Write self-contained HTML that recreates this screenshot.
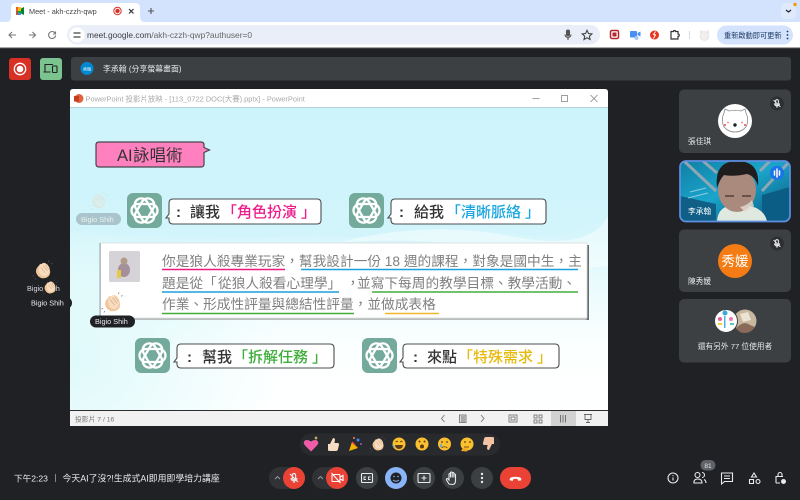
<!DOCTYPE html>
<html lang="zh-Hant"><head><meta charset="utf-8"><title>Meet - akh-czzh-qwp</title>
<style>
html,body{margin:0;padding:0;background:#202124;width:800px;height:500px;overflow:hidden}
svg{display:block;position:absolute;left:0;top:0;filter:blur(.3px)}
text{font-family:"Liberation Sans","Noto Sans CJK TC",sans-serif}
</style></head><body>
<svg width="800" height="500" viewBox="0 0 800 500" xmlns="http://www.w3.org/2000/svg">
<defs>
<linearGradient id="sl" x1="0" y1="0" x2="0" y2="1"><stop offset="0" stop-color="#cdf3fb"/><stop offset=".4" stop-color="#d3f5fb"/><stop offset=".58" stop-color="#eafbfd"/><stop offset=".8" stop-color="#fcffff"/><stop offset="1" stop-color="#fff"/></linearGradient>
<radialGradient id="pale" gradientUnits="userSpaceOnUse" cx="70" cy="360" r="210"><stop offset="0" stop-color="#dcf9fa" stop-opacity=".9"/><stop offset="1" stop-color="#dcf9fa" stop-opacity="0"/></radialGradient>
<linearGradient id="vid" x1="0" y1="0" x2="1" y2="1"><stop offset="0" stop-color="#0f7fa5"/><stop offset=".45" stop-color="#1ba5cc"/><stop offset="1" stop-color="#0a5578"/></linearGradient>
<clipPath id="vc"><rect x="680" y="161" width="110" height="60" rx="6"/></clipPath>
<symbol id="knot" viewBox="-18 -18 36 36" overflow="visible"><g fill="none" stroke="#fff" stroke-width="2.300"><rect x="-13" y="-6.500" width="26" height="13" rx="6.500"/><rect x="-13" y="-6.500" width="26" height="13" rx="6.500" transform="rotate(60)"/><rect x="-13" y="-6.500" width="26" height="13" rx="6.500" transform="rotate(120)"/></g></symbol>
<symbol id="clap" viewBox="0 0 20 20" overflow="visible">
<path d="M3 8l4-5 3 1 2-2 3 2 2 3 1 5q0 6-6 7-5 1-8-3-3-4-1-8z" fill="#f0c69c"/>
<path d="M6 6l4-4 3 1 3 3 1 5q-1 5-5 6-4 0-6-4-1-4 0-7z" fill="#f8dcc0"/>
<path d="M7.500 7l5 6M10 5l5 6M12.500 4l3.500 5" stroke="#dcae84" stroke-width=".8" fill="none"/>
<path d="M16 1l1-1.500M19 3.500l1.500-1M0 16l-1.500 1M2 19l-1 1.500" stroke="#666" stroke-width=".7"/></symbol>
<symbol id="mute" viewBox="0 0 14 14"><path d="M7 2.500a1.600 1.600 0 0 1 1.600 1.600v3a1.600 1.600 0 0 1-3.200 0v-3A1.600 1.600 0 0 1 7 2.500zM4 7a3 3 0 0 0 6 0M7 10v2M3 3l8 8" fill="none" stroke="#e8eaed" stroke-width="1.200"/></symbol>
</defs>

<!-- Chrome tab strip -->
<rect width="800" height="22" fill="#d3e3fd"/>
<path d="M6 22q5 0 5-5V8q0-5 5-5h119q5 0 5 5v9q0 5 5 5z" fill="#fff"/>
<g transform="translate(16,7)"><rect width="5" height="8" rx="1" fill="#00ac47"/><path d="M0 0h5v4H0z" fill="#fbbc04"/><path d="M0 0h2v8H0z" fill="#ea4335" opacity=".8"/><path d="M5 1.500l3-1.500v8l-3-1.500z" fill="#00832d"/><path d="M2 6h3v2H2z" fill="#4285f4"/></g>
<text x="29" y="14" font-size="7.300" fill="#444746">Meet - akh-czzh-qwp</text>
<circle cx="117.500" cy="11" r="3.700" fill="none" stroke="#d93025" stroke-width="1"/><circle cx="117.500" cy="11" r="2.200" fill="#d93025"/>
<path d="M129 9l4.500 4.500M133.500 9L129 13.500" stroke="#333" stroke-width="1.200"/>
<path d="M151 8v6M148 11h6" stroke="#555" stroke-width="1.100"/>
<rect x="781" y="3" width="15" height="16" rx="4" fill="#dee9fb"/>
<path d="M786 10l2.500 2 2.500-2" fill="none" stroke="#222" stroke-width="1.200"/><circle cx="795" cy="4.500" r="1.700" fill="#f29900"/>

<!-- Chrome toolbar -->
<rect y="22" width="800" height="26" fill="#fff"/>
<rect y="47.500" width="800" height="1" fill="#555"/>
<path d="M16 35H9M12 32l-3 3 3 3" fill="none" stroke="#777" stroke-width="1.100"/>
<path d="M29 35h6.500M32.500 32l3 3-3 3" fill="none" stroke="#777" stroke-width="1.100"/>
<path d="M55 33a3.500 3.500 0 1 0 .6 2.500M55.500 31.500V34H53" fill="none" stroke="#777" stroke-width="1.100"/>
<rect x="67" y="25" width="533" height="19.500" rx="9.700" fill="#e9eef8"/>
<circle cx="77" cy="35" r="7.500" fill="#fff"/><path d="M73.500 33h7M73.500 37h7" stroke="#444" stroke-width="1.300"/>
<text x="87" y="38" font-size="8.400" fill="#3c4043">meet.google.com<tspan fill="#666">/akh-czzh-qwp?authuser=0</tspan></text>
<g fill="none" stroke="#555" stroke-width="1.100"><rect x="566.500" y="30" width="3" height="6" rx="1.500" fill="#555"/><path d="M565 34.500a3 3 0 0 0 6 0M568 37.500V40"/></g>
<path d="M587 30.300l1.500 3.200 3.400.4-2.500 2.300.7 3.300-3.100-1.700-3 1.700.7-3.300-2.500-2.300 3.400-.4z" fill="none" stroke="#444" stroke-width="1.100"/>
<rect x="610.500" y="30.500" width="8" height="8" rx="1.500" fill="#fff" stroke="#b3262e" stroke-width="1.500"/><rect x="612.500" y="32.500" width="4" height="4" fill="#b3262e"/>
<rect x="630" y="31" width="7" height="6.500" rx="1" fill="#4a90f0"/><path d="M637.500 33l3-1.500v5l-3-1.500z" fill="#4a90f0"/><circle cx="636.500" cy="38" r="2" fill="#a6c8f5"/>
<circle cx="654.500" cy="35" r="4.500" fill="#e8331e"/><path d="M655.500 31.500l-2 3 2 .5-2 3.500" fill="none" stroke="#fff" stroke-width="1"/>
<path d="M671 31.500h2.500a1 1 0 0 1 2 0h2.500v2.500a1 1 0 0 1 0 2.500V39H671z" fill="none" stroke="#333" stroke-width="1.200"/>
<rect x="689" y="31" width=".8" height="8" fill="#c5d3e6"/>
<circle cx="704.500" cy="36" r="4.500" fill="#f1efee" stroke="#ddd" stroke-width=".6"/><path d="M700 33l1-2.500 2 1.500M709 33l-1-2.500-2 1.500" fill="#f1efee" stroke="#ddd" stroke-width=".6"/>
<rect x="717" y="25.500" width="76" height="19" rx="9.500" fill="#d3e3fd"/>
<text x="724" y="38" font-size="7.200" fill="#1f3b63">重新啟動即可更新</text>
<g fill="#1f3b63"><circle cx="787.500" cy="31.500" r=".9"/><circle cx="787.500" cy="35" r=".9"/><circle cx="787.500" cy="38.500" r=".9"/></g>

<!-- share bar -->
<rect x="9" y="58" width="22" height="22" rx="3" fill="#d93025"/>
<circle cx="20" cy="69" r="5.700" fill="none" stroke="#fff" stroke-width="1.300"/><circle cx="20" cy="69" r="3.300" fill="#fff"/>
<rect x="40" y="58" width="22" height="22" rx="3" fill="#7bc48f"/>
<path d="M45 72v-7.500h8M43.500 72h7" fill="none" stroke="#222" stroke-width="1.100"/><rect x="52.500" y="66" width="4.500" height="6.500" rx=".6" fill="none" stroke="#222" stroke-width="1.100"/>
<rect x="71" y="57" width="720" height="23.500" rx="3" fill="#3c4043"/>
<circle cx="87" cy="68.500" r="6.500" fill="#0288d1"/>
<text x="87" y="70.500" font-size="4" fill="#fff" text-anchor="middle">承翰</text>
<text x="103" y="71.500" font-size="7.900" fill="#e8eaed">李承翰 (分享螢幕畫面)</text>

<!-- PowerPoint window -->
<path d="M70 107V92q0-3 3-3h532q3 0 3 3v15z" fill="#fff"/>
<circle cx="79" cy="98.500" r="4.500" fill="#e0633f"/><rect x="74" y="96" width="5" height="5.500" fill="#c43e1c"/>
<text x="85.500" y="101.500" font-size="7.430" fill="#a9a9a9">PowerPoint 投影片放映 - [113_0722 DOC(大賽).pptx] - PowerPoint</text>
<path d="M532.500 98.500h7" stroke="#888" stroke-width=".8"/><rect x="561.500" y="95.500" width="6" height="6" fill="none" stroke="#888" stroke-width=".8"/><path d="M590.500 95l7 7M597.500 95l-7 7" stroke="#888" stroke-width=".8"/>
<rect x="70" y="107" width="538" height="304" fill="url(#sl)"/>
<rect x="70" y="230" width="300" height="181" fill="url(#pale)"/>
<rect x="70" y="107" width="538" height="1" fill="#8fa9ad"/>
<path d="M400 240q60-22 110-8t98-18v-107H70v125q100 10 180 6t150 2z" fill="#cff4fc" opacity=".55"/>
<path d="M340 242q90-22 170-6t98-20v50q-80 10-110-10t-158-14z" fill="#fff" opacity=".45"/>
<rect x="70" y="410" width="538" height="1.300" fill="#2d2d2d"/>
<rect x="70" y="411" width="538" height="15" fill="#f1f1f1"/>
<text x="75" y="421.500" font-size="6.800" fill="#777">投影片 7 / 16</text>
<g fill="none" stroke="#777" stroke-width=".9">
<path d="M444.500 415l-3 3.500 3 3.500M481 415l3 3.500-3 3.500"/>
<rect x="459.500" y="415" width="6.500" height="7.500" fill="#ddd"/><path d="M461 417h4M461 419h4M461 421h4"/>
<rect x="509" y="415" width="8" height="7"/><rect x="511" y="417" width="4" height="3"/>
<rect x="534" y="415" width="3" height="3"/><rect x="539" y="415" width="3" height="3"/><rect x="534" y="420" width="3" height="3"/><rect x="539" y="420" width="3" height="3"/>
</g>
<rect x="551" y="411" width="25" height="15" fill="#d2d2d2"/>
<g fill="none" stroke="#666" stroke-width=".9"><path d="M560.500 415v7.500M563 415v7.500M565.500 415v7.500"/><path d="M584 414.500h8M585 414.500v5h6v-5M588 419.500v2.500M586 422.500h4"/></g>

<!-- slide title -->
<path d="M99 142h102q3 0 3 3v2.500l5.500 2.500-5.500 2.500V164q0 3-3 3H99q-3 0-3-3v-19q0-3 3-3z" fill="#ff80bf" stroke="#44474a" stroke-width="1.200"/>
<text y="161" font-size="16.500" fill="#333"><tspan x="117">A</tspan><tspan x="128">I</tspan><tspan x="133">詠唱術</tspan></text>

<!-- tiles -->
<rect x="127" y="193" width="35" height="35" rx="6" fill="#74aa9c"/><use href="#knot" x="126.500" y="192.500" width="36" height="36"/>
<rect x="349" y="193" width="35" height="35" rx="6" fill="#74aa9c"/><use href="#knot" x="348.500" y="192.500" width="36" height="36"/>
<rect x="135" y="338" width="35" height="35" rx="6" fill="#74aa9c"/><use href="#knot" x="134.500" y="337.500" width="36" height="36"/>
<rect x="362" y="338" width="35" height="35" rx="6" fill="#74aa9c"/><use href="#knot" x="361.500" y="337.500" width="36" height="36"/>

<g fill="#fff" stroke="#4a4d50" stroke-width="1.100">
<path d="M173 199h144q4 0 4 4v17q0 4-4 4H173q-4 0-4-4v-2l-3 0 3-4v-11q0-4 4-4z"/>
<path d="M395 199h147q4 0 4 4v17q0 4-4 4H395q-4 0-4-4v-2l-3 0 3-4v-11q0-4 4-4z"/>
<path d="M181 344h149q4 0 4 4v16q0 4-4 4H181q-4 0-4-4v-2l-3 0 3-4v-10q0-4 4-4z"/>
<path d="M407 344h148q4 0 4 4v16q0 4-4 4H407q-4 0-4-4v-2l-3 0 3-4v-10q0-4 4-4z"/>
</g>
<g font-size="15" fill="#333" font-weight="500">
<text x="176" y="217" font-weight="700">:</text><text y="217"><tspan x="190">讓我</tspan><tspan x="222" fill="#ec1c8c">「</tspan><tspan x="237" fill="#ec1c8c">角色扮演</tspan><tspan x="301" fill="#ec1c8c">」</tspan></text>
<text x="399" y="217" font-weight="700">:</text><text y="217"><tspan x="414">給我</tspan><tspan x="446" fill="#1aa7e0">「</tspan><tspan x="461" fill="#1aa7e0">清晰脈絡</tspan><tspan x="525" fill="#1aa7e0">」</tspan></text>
<text x="187" y="362" font-weight="700">:</text><text y="362"><tspan x="202">幫我</tspan><tspan x="233" fill="#3fae3a">「</tspan><tspan x="248" fill="#3fae3a">拆解任務</tspan><tspan x="312" fill="#3fae3a">」</tspan></text>
<text x="413" y="362" font-weight="700">:</text><text y="362"><tspan x="427">來點</tspan><tspan x="458" fill="#e8b90f">「</tspan><tspan x="473" fill="#e8b90f">特殊需求</tspan><tspan x="537" fill="#e8b90f">」</tspan></text>
</g>

<!-- prompt box -->
<rect x="102" y="245" width="487" height="75" fill="#b9bcbc"/>
<rect x="586.500" y="245" width="2.500" height="75" fill="#6b6e70"/>
<rect x="100" y="243" width="487" height="75" fill="#fff" stroke="#d8dcdc" stroke-width=".8"/>
<rect x="99.500" y="243" width="1.200" height="75" fill="#9aa5a8"/>
<rect x="109" y="251" width="31" height="31" rx="1.500" fill="#d6d3d8"/>
<ellipse cx="124" cy="270" rx="6" ry="7" fill="#a58f9a"/><circle cx="124" cy="261" r="3.500" fill="#b09a88"/><rect x="117" y="270" width="4" height="8" fill="#e6c84d"/>
<g font-size="13.700" fill="#808080">
<text x="162" y="266">你是狼人殺專業玩家，幫我設計一份 18 週的課程，對象是國中生，主</text>
<text y="288"><tspan x="162">題是從「</tspan><tspan x="218">從狼人殺看心理學」</tspan><tspan x="346">，</tspan><tspan x="357">並寫下每周的教學目標、教學活動、</tspan></text>
<text x="162" y="309">作業、形成性評量與總結性評量，並做成表格</text>
</g>
<g stroke-width="1.500" fill="none">
<path d="M162 269.500h123" stroke="#ee1c80"/><path d="M301 269.500h277" stroke="#1aa0dc"/>
<path d="M162 292h177" stroke="#1aa0dc"/><path d="M372 292h206" stroke="#44ad3a"/>
<path d="M162 313.500h192" stroke="#44ad3a"/><path d="M385 313.500h54" stroke="#f0b72f"/>
</g>

<!-- reactions -->
<use href="#clap" x="34" y="261" width="18" height="18"/>
<rect x="24" y="282" width="40" height="13" rx="6.500" fill="#202124"/>
<text x="27" y="291" font-size="7.300" fill="#d8dadd">Bigio Shih</text>
<use href="#clap" x="43" y="280" width="14" height="14"/>
<rect x="26" y="297" width="46" height="12" rx="6" fill="#202124"/>
<text x="31" y="305.500" font-size="7.300" fill="#e8eaed">Bigio Shih</text>
<use href="#clap" x="103" y="293" width="19" height="19"/>
<rect x="90" y="315.500" width="45" height="12" rx="6" fill="#202124"/>
<text x="95" y="324" font-size="7.300" fill="#e8eaed">Bigio Shih</text>
<g opacity=".22"><use href="#clap" x="90" y="192" width="17" height="17"/><rect x="76" y="213" width="45" height="12" rx="6" fill="#202124"/></g>
<text x="81" y="222" font-size="7.300" fill="#fff" opacity=".75">Bigio Shih</text>

<!-- participant tiles -->
<rect x="679" y="89.500" width="112" height="63.500" rx="5" fill="#3c4043"/>
<circle cx="735" cy="121" r="17" fill="#fff"/>
<path d="M724 113l1-4 4 2q6-1.500 12 0l4-2 1 4q3 6 .5 13-4 6-11.500 6t-11.500-6q-2.500-7 .5-13z" fill="none" stroke="#888" stroke-width=".8"/>
<g fill="#e44"><circle cx="725" cy="125" r="1"/><circle cx="745" cy="125" r="1"/><circle cx="728" cy="122.500" r=".7"/><circle cx="742" cy="122.500" r=".7"/></g><circle cx="735" cy="125" r="1.700" fill="#222"/>
<circle cx="777" cy="103.500" r="7" fill="#2d2f33"/><use href="#mute" x="771" y="97.500" width="12" height="12"/>
<text x="688" y="144" font-size="7.700" fill="#e8eaed">張佳琪</text>

<g clip-path="url(#vc)">
<rect x="680" y="161" width="110" height="60" fill="url(#vid)"/>
<path d="M680 196l36 8v18h-36z" fill="#0f5f86"/>
<path d="M690 192l16-4M688 198l20-5" stroke="#bfe3ee" stroke-width="1" opacity=".7"/>
<path d="M684 161l32 30M703 161l14 12M790 161l-28 30M770 161l-10 10" stroke="#8fa6b3" stroke-width="3" fill="none"/>
<path d="M762 195l28-8v34h-28z" fill="#0c5d85"/>
<path d="M717 221q1-12 11-15h22q14 3 17 15z" fill="#dfe9e0"/>
<ellipse cx="737" cy="190" rx="19" ry="22" fill="#a98a7c"/>
<path d="M717 188q-3-27 20-27 23 0 21 25-3-10-11-12-14 3-23 1-4 4-7 13z" fill="#1f1d1e"/>
<path d="M725 196h9M742 196h9" stroke="#54403a" stroke-width="1.600"/>
<path d="M740 207q8-2 12-7l2 6q-4 5-9 6z" fill="#e4dcd4" opacity=".8"/>
</g>
<rect x="680" y="161" width="110" height="60.500" rx="6" fill="none" stroke="#5f90e2" stroke-width="1.700"/>
<circle cx="777" cy="173" r="7" fill="#1a73e8"/><path d="M774.500 171v4M777 169v8M779.500 171v4" stroke="#fff" stroke-width="1.500" stroke-linecap="round"/>
<text x="688" y="214" font-size="7.700" fill="#fff">李承翰</text>

<rect x="679" y="229.500" width="112" height="62.500" rx="5" fill="#3c4043"/>
<circle cx="735" cy="261" r="17" fill="#f57c14"/>
<text x="735" y="266" font-size="13.500" fill="#fff" text-anchor="middle">秀媛</text>
<circle cx="777" cy="243.500" r="7" fill="#2d2f33"/><use href="#mute" x="771" y="237.500" width="12" height="12"/>
<text x="688" y="284" font-size="7.700" fill="#e8eaed">陳秀媛</text>

<rect x="679" y="299" width="112" height="63.500" rx="5" fill="#3c4043"/>
<circle cx="745" cy="321" r="11.500" fill="#c8b8a0"/><path d="M736 328q8-8 14-3l5 2q-4 6-10 6t-9-5z" fill="#8a6b5a"/><path d="M740 314l8-2 3 8-8 2z" fill="#ece3d4"/>
<circle cx="726" cy="321" r="11.500" fill="#fff" stroke="#3c4043" stroke-width="1"/>
<g><circle cx="725" cy="313" r="2.500" fill="#3aa8dd"/><circle cx="720" cy="319" r="2" fill="#e95ca0"/><circle cx="731" cy="319" r="2" fill="#f07ab0"/><rect x="718" y="323" width="4" height="2" fill="#f3d33c"/><rect x="730" y="323" width="4" height="2" fill="#62c5b5"/><rect x="724" y="316" width="1.500" height="12" fill="#55b3dd"/></g>
<text x="735" y="349" font-size="7.700" fill="#e8eaed" text-anchor="middle">還有另外 77 位使用者</text>

<!-- reaction bar -->
<rect x="300" y="433.500" width="200" height="22" rx="11" fill="#292a2d"/>
<path d="M311 451.500l-6-6q-2.500-3 0-5 2.500-1.500 6 1 3.500-2.500 6-1 2.500 2 0 5z" fill="#ef5da8"/><path d="M316 436l.6 1.500 1.400.5-1.400.5-.6 1.500-.6-1.500-1.400-.5 1.400-.5z" fill="#ffe082"/>
<path d="M328 444h2l3-6q2 0 2 2l-.6 3h3q2 0 1.600 2l-1 4q-.4 2-2 2h-6q-1 0-2-.5z" fill="#f6dcc2"/>
<path d="M349 451l3-9 6 6z" fill="#f4b400"/><path d="M352 442l3 3" stroke="#e44" stroke-width="1.500"/><circle cx="358" cy="440" r="1.500" fill="#4285f4"/><circle cx="354" cy="438" r="1" fill="#e85"/><circle cx="361" cy="444" r="1" fill="#9c5ab8"/>
<use href="#clap" x="371" y="437" width="14" height="14"/>
<circle cx="399" cy="444" r="6.500" fill="#fbc02d"/><path d="M395 445h8q-.5 4-4 4t-4-4z" fill="#5d3a1a"/><path d="M395.500 442l1.500-1 1 1M400 442l1.500-1 1 1" stroke="#5d3a1a" fill="none" stroke-width=".8"/><path d="M392 445l1.500 3 1.500-2z" fill="#5aa7ea"/>
<circle cx="422" cy="444" r="6.500" fill="#fbc02d"/><circle cx="422" cy="446.500" r="2" fill="#5d3a1a"/><circle cx="419.500" cy="441.500" r="1" fill="#5d3a1a"/><circle cx="424.500" cy="441.500" r="1" fill="#5d3a1a"/>
<circle cx="444.500" cy="444" r="6.500" fill="#fbc02d"/><path d="M441.500 448q3-2.500 6 0" stroke="#5d3a1a" fill="none" stroke-width=".8"/><circle cx="442" cy="442" r=".9" fill="#5d3a1a"/><circle cx="447" cy="442" r=".9" fill="#5d3a1a"/><path d="M441 443l-1.500 4 3 0z" fill="#5aa7ea"/>
<circle cx="467" cy="444" r="6.500" fill="#fbc02d"/><circle cx="465" cy="442" r=".9" fill="#5d3a1a"/><circle cx="470" cy="442" r=".9" fill="#5d3a1a"/><path d="M464 447h5" stroke="#5d3a1a" stroke-width=".8"/><path d="M461 451q1-3 5-3l2 1-1 2.500z" fill="#f2a91f"/>
<path d="M494 444h-2l-3 6q-2 0-2-2l.6-3h-3q-2 0-1.600-2l1-4q.4-2 2-2h6q1 0 2 .5z" fill="#f2c4a4"/>

<!-- bottom bar -->
<text x="14" y="481.500" font-size="8.600" fill="#e8eaed">下午2:23</text>
<rect x="55" y="474" width=".8" height="8" fill="#9aa0a6"/>
<text x="62.500" y="481.500" font-size="8.900" fill="#e8eaed">今天AI了沒?!生成式AI即用即學培力講座</text>

<rect x="269" y="467" width="36" height="22" rx="11" fill="#303236"/>
<circle cx="294" cy="478" r="11" fill="#ea4335"/>
<path d="M275 479l2.500-2.500 2.500 2.500" stroke="#9aa0a6" fill="none" stroke-width=".9"/>
<use href="#mute" x="287" y="471" width="14" height="14"/>
<rect x="312" y="467" width="36" height="22" rx="11" fill="#303236"/>
<circle cx="337" cy="478" r="11" fill="#ea4335"/>
<path d="M318 479l2.500-2.500 2.500 2.500" stroke="#9aa0a6" fill="none" stroke-width=".9"/>
<rect x="332" y="474.500" width="8" height="7" rx="1" fill="none" stroke="#fff" stroke-width="1.100"/><path d="M340 477l3-1.500v5l-3-1.500zM331.500 473l9 10" fill="none" stroke="#fff" stroke-width="1.100"/>
<circle cx="367" cy="478" r="11" fill="#3c4043"/><rect x="361.500" y="473.500" width="11" height="9" rx="1" fill="none" stroke="#e8eaed" stroke-width="1.100"/><path d="M366 477h-2v2.500h2M370.500 477h-2v2.500h2" fill="none" stroke="#e8eaed" stroke-width=".9"/>
<circle cx="396" cy="478" r="11" fill="#8ab4f8"/><circle cx="396" cy="478" r="5.500" fill="#202124"/><path d="M393 480q3 2.500 6 0" stroke="#8ab4f8" fill="none"/><circle cx="394" cy="476.500" r=".8" fill="#8ab4f8"/><circle cx="398" cy="476.500" r=".8" fill="#8ab4f8"/>
<circle cx="424" cy="478" r="11" fill="#3c4043"/><rect x="418" y="473.500" width="12" height="9" rx="1" fill="none" stroke="#e8eaed" stroke-width="1.100"/><path d="M424 475.500v5M421.500 478h5" stroke="#e8eaed" stroke-width="1.100"/>
<circle cx="453" cy="478" r="11" fill="#3c4043"/><path d="M449 484l-2.500-4q-.5-1.500 1-1.500l1.500 1.500v-6q1-1.200 1.500 0v3.500-5q1-1.200 1.700 0v5-4.500q1-1.200 1.700 0v4.500-3q1-1 1.600 0v6q0 4-3 4z" fill="none" stroke="#e8eaed" stroke-width="1.100"/>
<circle cx="482" cy="478" r="11" fill="#3c4043"/><g fill="#e8eaed"><circle cx="482" cy="474" r="1.200"/><circle cx="482" cy="478" r="1.200"/><circle cx="482" cy="482" r="1.200"/></g>
<rect x="500" y="467" width="31" height="22" rx="11" fill="#ea4335"/>
<path d="M510 480q-.5-3 5.500-3t5.500 3l-2.500.5-.8-1.700q-2.200-.6-4.400 0l-.8 1.700z" fill="#fff" stroke="#fff" stroke-width=".6"/>

<g fill="none" stroke="#e8eaed" stroke-width="1.100">
<circle cx="673" cy="478" r="5"/><path d="M673 477.500v3M673 475.200v1"/>
<circle cx="697.500" cy="475" r="2.500"/><path d="M694 483q-.5-4 4-4 4 0 4 4z"/><path d="M702 472.500a2.500 2.500 0 0 1 0 5M704 479.500q2 1 2 3.500"/>
<path d="M721.500 473h11v8.500h-8l-3 2.500z"/><path d="M724 476h6M724 478.500h6"/>
<path d="M754 473l2.500 4h-5zM749.500 479.500h4v4h-4z"/><circle cx="758" cy="481.500" r="2"/>
<path d="M776 483v-6.500h7M778 476.500v-2a2 2 0 0 1 4 0v2M776 483h4"/>
</g>
<circle cx="783.500" cy="481.500" r="2.500" fill="#e8eaed"/>
<rect x="700.500" y="460" width="15" height="10.500" rx="5.200" fill="#5f6368"/>
<text x="708" y="468" font-size="6.500" fill="#e8eaed" text-anchor="middle">81</text>
</svg>
</body></html>
